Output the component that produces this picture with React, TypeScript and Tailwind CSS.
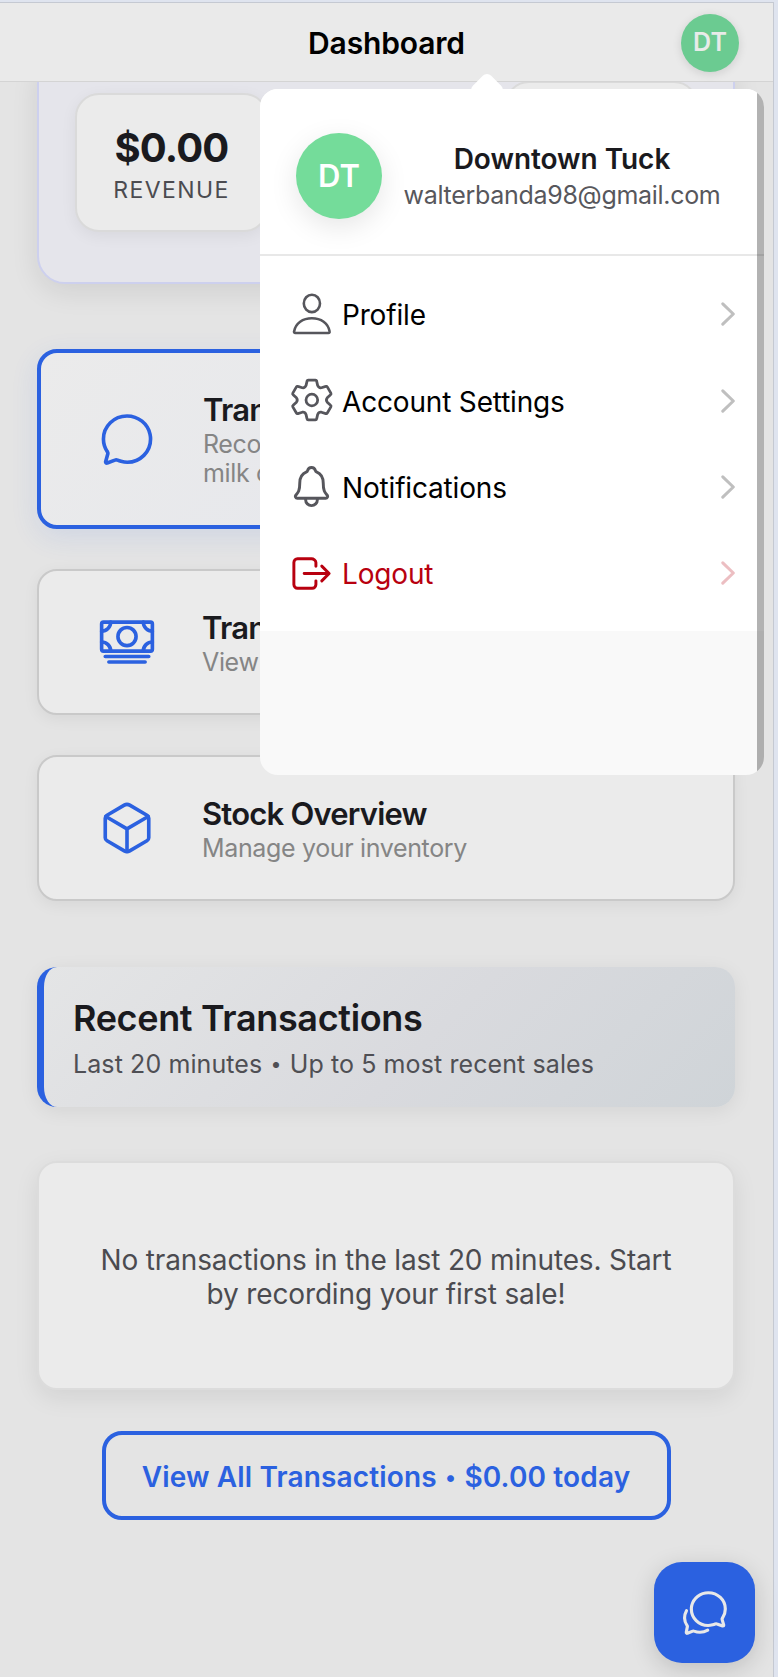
import type { ReactNode } from "react";
import {
  IoCashOutline,
  IoChatbubbleOutline,
  IoChatbubblesOutline,
  IoCubeOutline,
  IoLogOutOutline,
  IoNotificationsOutline,
} from "react-icons/io5";

type IconProps = { className?: string };

type ActionCardProps = {
  icon: ReactNode;
  title: string;
  text: string;
};

function PersonIcon({ className }: IconProps) {
  return (
    <svg viewBox="0 0 47 47" fill="none" stroke="currentColor" strokeWidth="2.6" strokeLinejoin="round" className={className}>
      <ellipse cx="23.9" cy="12.4" rx="8.1" ry="8.7" />
      <path d="M7.3 42H40.4c1 0 1.4-.7 1.2-1.6C40.2 32.2 33 27.2 23.9 27.2S7.6 32.2 6.1 40.400c-.2.9.2 1.600 1.200 1.600z" />
    </svg>
  );
}

function GearIcon({ className }: IconProps) {
  return (
    <svg viewBox="-69.5 -67 137 137" fill="none" stroke="currentColor" strokeWidth="8" strokeLinejoin="round" className={className}>
      <path d="M-17-42L-14-55Q-13.500-58-10.500-58H10.500Q13.500-58 14-55L17-42Q20-34.600 27.900-35.700L40.600-39.600Q43.500-40.700 45-38.100L55.500-19.900Q57-17.300 54.600-15.400L44.900-6.300Q40 0 44.900 6.300L54.600 15.400Q57 17.300 55.500 19.900L45 38.100Q43.500 40.700 40.600 39.600L27.900 35.700Q20 34.600 17 42L14 55Q13.500 58 10.500 58H-10.500Q-13.500 58-14 55L-17 42Q-20 34.600-27.900 35.700L-40.600 39.600Q-43.500 40.700-45 38.100L-55.500 19.900Q-57 17.300-54.600 15.400L-44.900 6.300Q-40 0-44.900-6.300L-54.600-15.400Q-57-17.300-55.500-19.900L-45-38.100Q-43.500-40.700-40.600-39.600L-27.900-35.700Q-20-34.600-17-42Z" />
      <circle r="17" />
    </svg>
  );
}

function Chevron({ className }: IconProps) {
  return (
    <svg viewBox="0 0 14 24" fill="none" stroke="currentColor" strokeWidth="3" strokeLinecap="round" strokeLinejoin="round" className={className}>
      <path d="M1.800 1.800L12.300 12L1.800 22.200" />
    </svg>
  );
}

const menuItems = [
  { label: "Profile", icon: PersonIcon },
  { label: "Account Settings", icon: GearIcon },
  { label: "Notifications", icon: IoNotificationsOutline },
  { label: "Logout", icon: IoLogOutOutline, danger: true },
];

function Bullet() {
  return <span className="mx-px align-[2px] text-[0.78em]">•</span>;
}

function ActionCard({ icon, title, text }: ActionCardProps) {
  return (
    <div className="flex h-[146px] items-center rounded-[20px] border-2 border-[#c9c9c9] bg-[#ebebeb] pl-[59px] shadow-[0_4px_16px_rgba(0,0,0,0.06)]">
      <div className="flex w-[58px] justify-center text-[#2b61e0]">{icon}</div>
      <div className="ml-[46px] pt-[2px]">
        <h3 className="text-[31px] leading-9 font-semibold tracking-[-0.8px] text-[#1a1a1e]">{title}</h3>
        <p className="mt-[2px] text-[25px] leading-[29px] tracking-[-0.35px] text-[#858585]">{text}</p>
      </div>
    </div>
  );
}

function UserMenu() {
  return (
    <div className="absolute top-[89px] left-[260px] z-20 w-[504px]">
      <div className="absolute -top-[12px] left-[214px] size-[26px] rotate-45 rounded-[6px] bg-white" />
      <div className="relative flex h-[686px] flex-col overflow-hidden rounded-[18px] bg-[#f9f9f9]">
        <div className="flex h-[167px] shrink-0 items-center border-b-2 border-[#e8e8e8] bg-white pt-[8px] pl-9">
          <div className="flex size-[86px] items-center justify-center rounded-full bg-[#74dc9a] pt-px text-[31px] font-semibold text-white shadow-[0_8px_28px_rgba(0,0,0,0.1)]">
            DT
          </div>
          <div className="ml-[21px] w-[318px] pt-[3px] text-center whitespace-nowrap">
            <p className="text-[28px] leading-9 font-semibold tracking-[-0.05px] text-[#1a1a1e]">Downtown Tuck</p>
            <p className="text-[25px] leading-9 tracking-[-0.3px] text-[#57575c]">walterbanda98@gmail.com</p>
          </div>
        </div>
        <ul className="h-[375px] shrink-0 bg-white pt-[15px] pr-[29px] pl-[28px]">
          {menuItems.map((item) => (
            <li
              key={item.label}
              className={`flex h-[86.4px] items-center ${item.danger ? "text-[#b8000f]" : "text-black"}`}
            >
              <item.icon className={`size-[47px] ${item.danger ? "" : "text-[#56565c]"}`} />
              <span className="ml-[7px] grow pt-[2px] text-[28px] tracking-[-0.17px]">{item.label}</span>
              <Chevron className={`h-6 w-3.5 ${item.danger ? "opacity-25" : "text-[#bfbfbf]"}`} />
            </li>
          ))}
        </ul>
        <div className="absolute top-0 right-0 h-full w-[7px] bg-black/30" />
      </div>
    </div>
  );
}

export default function App() {
  return (
    <div className="relative h-[1677px] w-[778px] overflow-hidden bg-[#dfe4ef] pt-[2px] font-['Inter',sans-serif]">
      <div className="h-full w-[774px] border-t border-r border-[#c5c9d2] bg-[#e4e4e4]">
        <header className="relative z-10 flex h-[79px] items-center border-b border-[#d4d4d4] bg-[#eaeaea]">
          <h1 className="w-full pt-[2px] text-center text-[30px] font-semibold tracking-[-0.15px] text-black">Dashboard</h1>
          <div className="absolute top-[11px] right-[34px] flex size-[58px] items-center justify-center rounded-full bg-[#6bcb91] text-[25px] font-semibold text-[#e8ebe9] shadow-[0_2px_10px_rgba(0,0,0,0.12)]">
            DT
          </div>
        </header>

        <main className="pr-[38px] pl-[37px]">
          <section className="-mt-[28px] flex h-[230px] items-center justify-between rounded-[28px] border-2 border-[#cdd0ee] bg-[#e5e5eb] pr-[35px] pl-[36px] shadow-[0_8px_28px_rgba(0,0,0,0.09)]">
            <div className="mt-[-14px] flex h-[139px] w-[193px] flex-col items-center justify-center rounded-3xl border-2 border-[#dadada] bg-[#ebebeb] pt-[9px] shadow-[0_4px_16px_rgba(0,0,0,0.06)]">
              <span className="text-[40px] leading-[46px] font-bold tracking-[-0.8px] text-[#1a1a1e]">$0.00</span>
              <span className="text-[23px] leading-[38px] tracking-[1.4px] text-[#4b4b50]">REVENUE</span>
            </div>
            <div className="mt-[-14px] h-[163px] w-[193px] rounded-3xl border-2 border-[#dadada] bg-[#ebebeb]" />
          </section>

          <section className="mt-[65px] flex flex-col gap-10">
            <div className="flex h-[180px] items-center rounded-[20px] border-4 border-[#2b61e0] bg-linear-[135deg,#ebebeb,#e3e5ed] pl-[57px] shadow-[0_8px_28px_rgba(43,97,224,0.11)]">
              <div className="flex w-[58px] justify-center text-[#2b61e0]">
                <IoChatbubbleOutline className="size-[59px]" />
              </div>
              <div className="ml-[47px] pt-[2px]">
                <h3 className="text-[31px] leading-9 font-semibold tracking-[-0.8px] text-[#1a1a1e]">Transactions</h3>
                <p className="mt-[2px] text-[25px] leading-[29px] tracking-[-0.35px] text-[#858585]">
                  Record sales and
                  <br />
                  milk collections
                </p>
              </div>
            </div>
            <ActionCard icon={<IoCashOutline className="size-[58px]" />} title="Transactions" text="View history" />
            <ActionCard icon={<IoCubeOutline className="size-[58px]" />} title="Stock Overview" text="Manage your inventory" />
          </section>

          <section className="mt-[66px] h-[140px] rounded-[20px] border-l-[7px] border-[#2b61e0] bg-linear-[135deg,#e4e5e6,#d9dade_55%,#cfd4d8] pt-[31px] pl-[29px] shadow-[0_4px_20px_rgba(0,0,0,0.07)]">
            <h2 className="text-[36px] leading-10 font-semibold tracking-[-0.35px] text-[#1a1a1e]">Recent Transactions</h2>
            <p className="mt-[11px] text-[25px] leading-[30px] tracking-[0.1px] text-[#4f4f54]">
              Last 20 minutes <Bullet /> Up to 5 most recent sales
            </p>
          </section>

          <section className="mt-[54px] flex h-[229px] items-center justify-center rounded-[20px] border-2 border-[#dcdcdc] bg-[#ebebeb] pt-[2px] text-center text-[28px] leading-[34px] tracking-[-0.15px] text-[#4b4b50] shadow-[0_8px_24px_rgba(0,0,0,0.08)]">
            <p>
              No transactions in the last 20 minutes. Start
              <br />
              by recording your first sale!
            </p>
          </section>

          <button className="mx-auto mt-[41px] block h-[89px] w-[569px] rounded-[20px] border-4 border-[#2b61e0] pt-[2px] text-[28px] font-semibold tracking-[0.15px] whitespace-nowrap text-[#2b61e0]">
            View All Transactions <Bullet /> $0.00 today
          </button>
        </main>
      </div>

      <UserMenu />

      <button className="absolute right-[23px] bottom-[14px] flex size-[101px] items-center justify-center rounded-[28px] bg-[#2b61e0] text-[#e8e8e8] shadow-[0_6px_24px_rgba(0,0,0,0.16)]">
        <IoChatbubblesOutline className="size-[50px]" />
      </button>
    </div>
  );
}
